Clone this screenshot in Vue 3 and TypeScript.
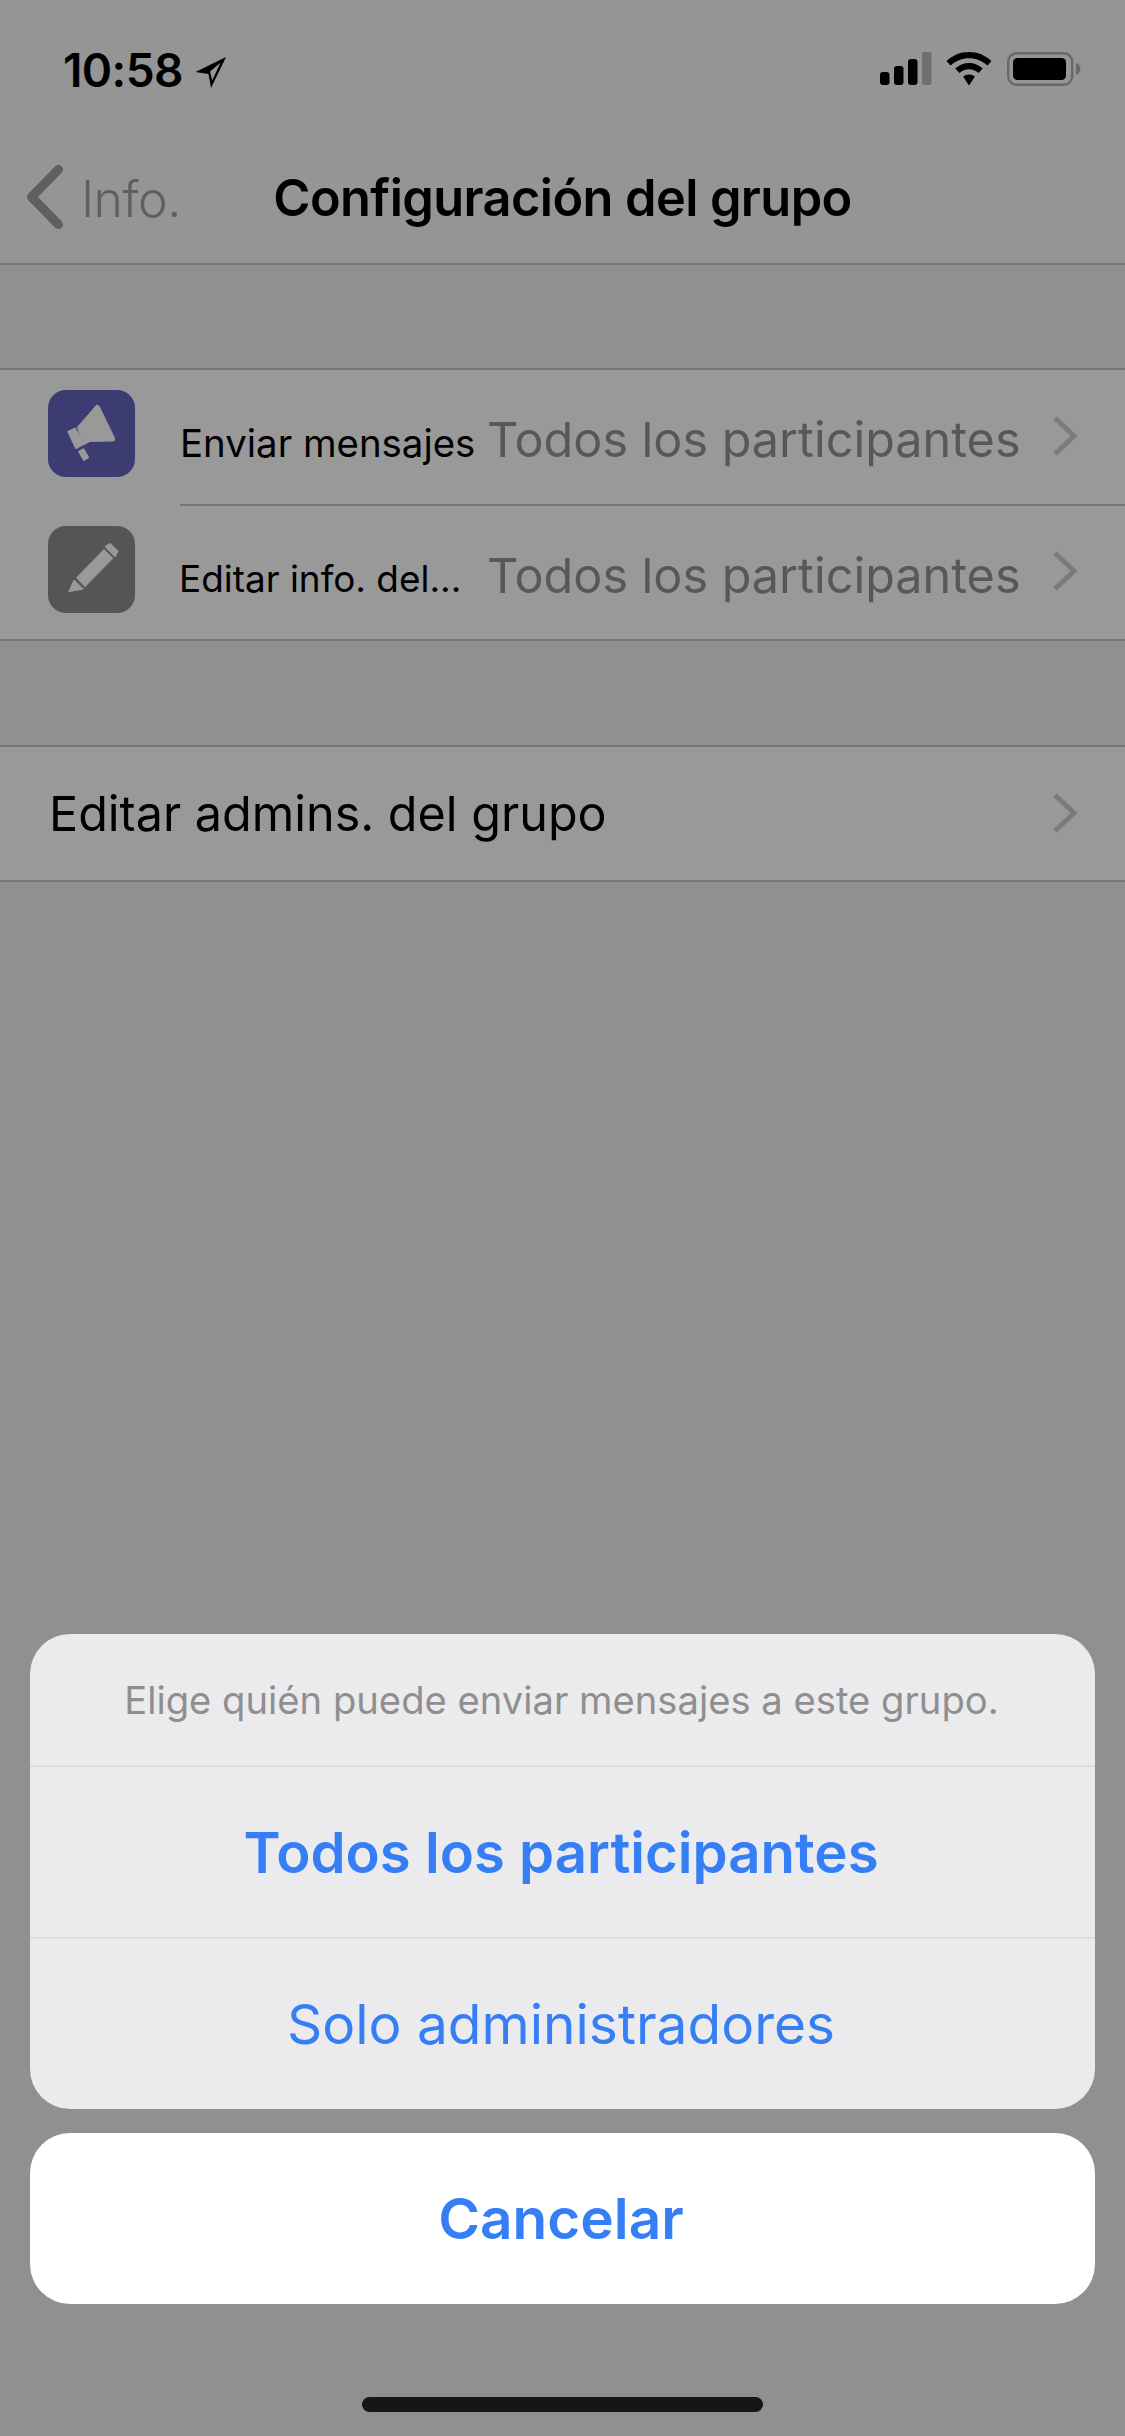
<script setup lang="ts">
interface Row { label: string; value: string; kind: 'mega' | 'pencil' }
const rows: Row[] = [
  { label: 'Enviar mensajes', value: 'Todos los participantes', kind: 'mega' },
  { label: 'Editar info. del...', value: 'Todos los participantes', kind: 'pencil' },
]
</script>

<template>
  <div class="screen">
    <header class="status">
      <div class="clock">
        <span class="time">10:58</span>
        <svg class="loc" width="32" height="32" viewBox="0 0 32 32">
          <path d="M31 1 L0.500 16 L13.500 18 L16 32 Z M25.500 6.800 L15 15.500 L17.200 24.500 Z" fill="#000" fill-rule="evenodd" />
        </svg>
      </div>
      <div class="indicators">
        <svg class="signal" width="52" height="34" viewBox="0 0 52 34">
          <rect x="0" y="20" width="9.500" height="13" rx="3" fill="#000" />
          <rect x="14" y="14" width="9.500" height="19" rx="3" fill="#000" />
          <rect x="28" y="7" width="9.500" height="26" rx="3" fill="#000" />
          <rect x="42" y="0" width="9.500" height="33" rx="2.500" fill="#6f6f6f" />
        </svg>
        <svg width="46" height="34" viewBox="0 0 46 34">
          <path d="M23 0 C14.500 0 6.600 3.300 0.500 9 L4.500 13.500 C9.500 8.900 16 6.200 23 6.200 C30 6.200 36.500 8.900 41.500 13.500 L45.500 9 C39.400 3.300 31.500 0 23 0 Z" fill="#000" />
          <path d="M23 11 C17.800 11 13 13 9.300 16.500 L13.400 21 C16 18.600 19.400 17.200 23 17.200 C26.600 17.200 30 18.600 32.600 21 L36.700 16.500 C33 13 28.200 11 23 11 Z" fill="#000" />
          <path d="M23 22.500 C20.700 22.500 18.700 23.300 17.200 24.800 L23 33.500 L28.800 24.800 C27.300 23.300 25.300 22.500 23 22.500 Z" fill="#000" />
        </svg>
        <svg width="74" height="34" viewBox="0 0 74 34">
          <rect x="1.200" y="1.200" width="64" height="31.600" rx="8.500" fill="none" stroke="#696969" stroke-width="2.400" />
          <rect x="6" y="6" width="53" height="22" rx="4.500" fill="#000" />
          <path d="M69 11 C72 12 73.500 14.500 73.500 17 C73.500 19.500 72 22 69 23 Z" fill="#696969" />
        </svg>
      </div>
    </header>

    <nav class="nav">
      <div class="back">
        <svg width="40" height="66" viewBox="0 0 40 66">
          <path d="M33.500 5.500 L6.500 33 L33.500 60.500" fill="none" stroke="#5f5f5f" stroke-width="9" stroke-linecap="round" stroke-linejoin="round" />
        </svg>
        <span>Info.</span>
      </div>
      <h1 class="title">Configuración del grupo</h1>
    </nav>

    <section class="group first">
      <div v-for="row in rows" :key="row.label" class="row" :class="'row-' + row.kind">
        <div class="icon" :class="row.kind">
          <svg v-if="row.kind === 'mega'" width="87" height="87" viewBox="0 0 87 87">
            <path d="M48.700 15 Q50.500 15 51.500 17 L66.500 48 Q67.500 51 65 51 L42 51.500 L35 55 L29.300 37.300 Z" fill="#999" stroke="#999" stroke-width="1" stroke-linejoin="round" />
            <path d="M20 41.700 L27 38.300 L35.300 54.300 L28 58.300 Z" fill="#999" stroke="#999" stroke-width="1.500" stroke-linejoin="round" />
            <path d="M31.300 61.700 L35.300 59.300 L40 67.300 L36 70 Z" fill="#999" stroke="#999" stroke-width="2" stroke-linejoin="round" />
          </svg>
          <svg v-else width="87" height="87" viewBox="0 0 87 87">
            <path d="M56 23 L65.300 32.300 L37 61.300 L28 51.700 Z" fill="#999" />
            <path d="M26 54 L35.300 63 L20.700 65.700 Z" fill="#999" stroke="#999" stroke-width="1" stroke-linejoin="round" />
            <path d="M58 20.700 L62 18 L69.300 25.300 L67 30 Z" fill="#999" stroke="#999" stroke-width="2" stroke-linejoin="round" />
          </svg>
        </div>
        <div class="row-body">
          <span class="label">{{ row.label }}</span>
          <span class="value">{{ row.value }}</span>
          <svg class="chev" width="26" height="42" viewBox="0 0 26 42">
            <path d="M3 3 L22 21 L3 39" fill="none" stroke="#7b7b7d" stroke-width="5" />
          </svg>
        </div>
      </div>
    </section>

    <section class="group second">
      <div class="plain">
        <span>Editar admins. del grupo</span>
        <svg class="chev" width="26" height="42" viewBox="0 0 26 42">
          <path d="M3 3 L22 21 L3 39" fill="none" stroke="#7b7b7d" stroke-width="5" />
        </svg>
      </div>
    </section>

    <div class="overlay">
      <div class="sheet">
        <p class="msg">Elige quién puede enviar mensajes a este grupo.</p>
        <div class="action bold">Todos los participantes</div>
        <div class="action regular">Solo administradores</div>
      </div>
      <div class="cancel">Cancelar</div>
      <div class="home"></div>
    </div>
  </div>
</template>

<style>
html, body { margin: 0; background: #909092; }
</style>

<style scoped>
.screen {
  position: relative;
  width: 1125px;
  height: 2436px;
  overflow: hidden;
  background: #909092;
  font-family: Inter, "Liberation Sans", sans-serif;
  color: #000;
}
.status {
  height: 132px;
  background: #959595;
  display: flex;
  justify-content: space-between;
  padding: 48px 44px 0 63px;
  box-sizing: border-box;
}
.clock { display: flex; align-items: flex-start; gap: 12px; }
.time { font-size: 46px; line-height: 44px; font-weight: 600; letter-spacing: -0.6px; }
.loc { margin-top: 8px; }
.indicators { display: flex; align-items: flex-start; gap: 15px; margin-top: 4px; }
.signal { margin-right: -1px; }
.nav {
  height: 133px;
  box-sizing: border-box;
  background: #959595;
  border-bottom: 2px solid #777779;
  position: relative;
  display: flex;
  align-items: center;
  justify-content: center;
}
.back {
  position: absolute;
  left: 25px;
  top: 32px;
  display: flex;
  align-items: center;
  gap: 16px;
  color: #5f5f5f;
  font-size: 50px;
  font-weight: 300;
  letter-spacing: -0.5px;
}
.back span { transform: translateY(2px); }
.title { margin: 0; font-size: 50.500px; font-weight: 600; letter-spacing: -0.6px; }
.group {
  background: #999;
  border-top: 2px solid #777779;
  border-bottom: 2px solid #777779;
}
.first { margin-top: 103px; }
.second { margin-top: 104px; }
.row { display: flex; height: 134px; padding-left: 48px; }
.row-pencil { height: 135px; }
.icon {
  flex: none;
  width: 87px;
  height: 87px;
  margin-top: 20px;
  border-radius: 18px;
}
.mega { background: #3c3b72; }
.pencil { background: #555558; margin-top: 22px; }
.row-body {
  flex: 1;
  margin-left: 45px;
  display: flex;
  align-items: center;
  padding-right: 47px;
}
.row-pencil .row-body { border-top: 2px solid #777779; }
.label { width: 307px; flex: none; font-size: 38.400px; transform: translateY(6px); white-space: nowrap; }
.row-pencil .label { font-size: 36.900px; transform: translate(-1px, 6px); }
.value { flex: 1; color: #58585c; font-size: 48.500px; font-weight: 400; white-space: nowrap; transform: translateY(2px); }
.row-pencil .value { transform: translateY(3px); }
.chev { flex: none; transform: translateY(-1px); }
.row-pencil .chev { transform: translateY(-2px); }
.plain {
  height: 133px;
  display: flex;
  align-items: center;
  justify-content: space-between;
  padding: 0 47px 0 49px;
  font-size: 48.500px;
}
.overlay {
  position: absolute;
  left: 30px;
  right: 30px;
  top: 1634px;
}
.sheet {
  background: #ebebee;
  border-radius: 40px;
  overflow: hidden;
}
.msg {
  margin: 0;
  height: 131px;
  padding-right: 2px;
  display: flex;
  align-items: center;
  justify-content: center;
  font-size: 38.200px;
  color: #8f8f8f;
}
.action {
  height: 172px;
  box-sizing: border-box;
  border-top: 2px solid #dcdcde;
  padding-right: 3px;
  display: flex;
  align-items: center;
  justify-content: center;
  color: #367ef6;
  font-size: 56.300px;
}
.bold { font-weight: 600; }
.regular { font-size: 55px; }
.cancel {
  margin-top: 24px;
  height: 171px;
  padding-right: 3px;
  background: #fff;
  border-radius: 40px;
  display: flex;
  align-items: center;
  justify-content: center;
  color: #367ef6;
  font-size: 56.700px;
  font-weight: 600;
}
.home {
  margin: 93px auto 0;
  width: 401px;
  height: 15px;
  border-radius: 8px;
  background: #161616;
}
</style>
